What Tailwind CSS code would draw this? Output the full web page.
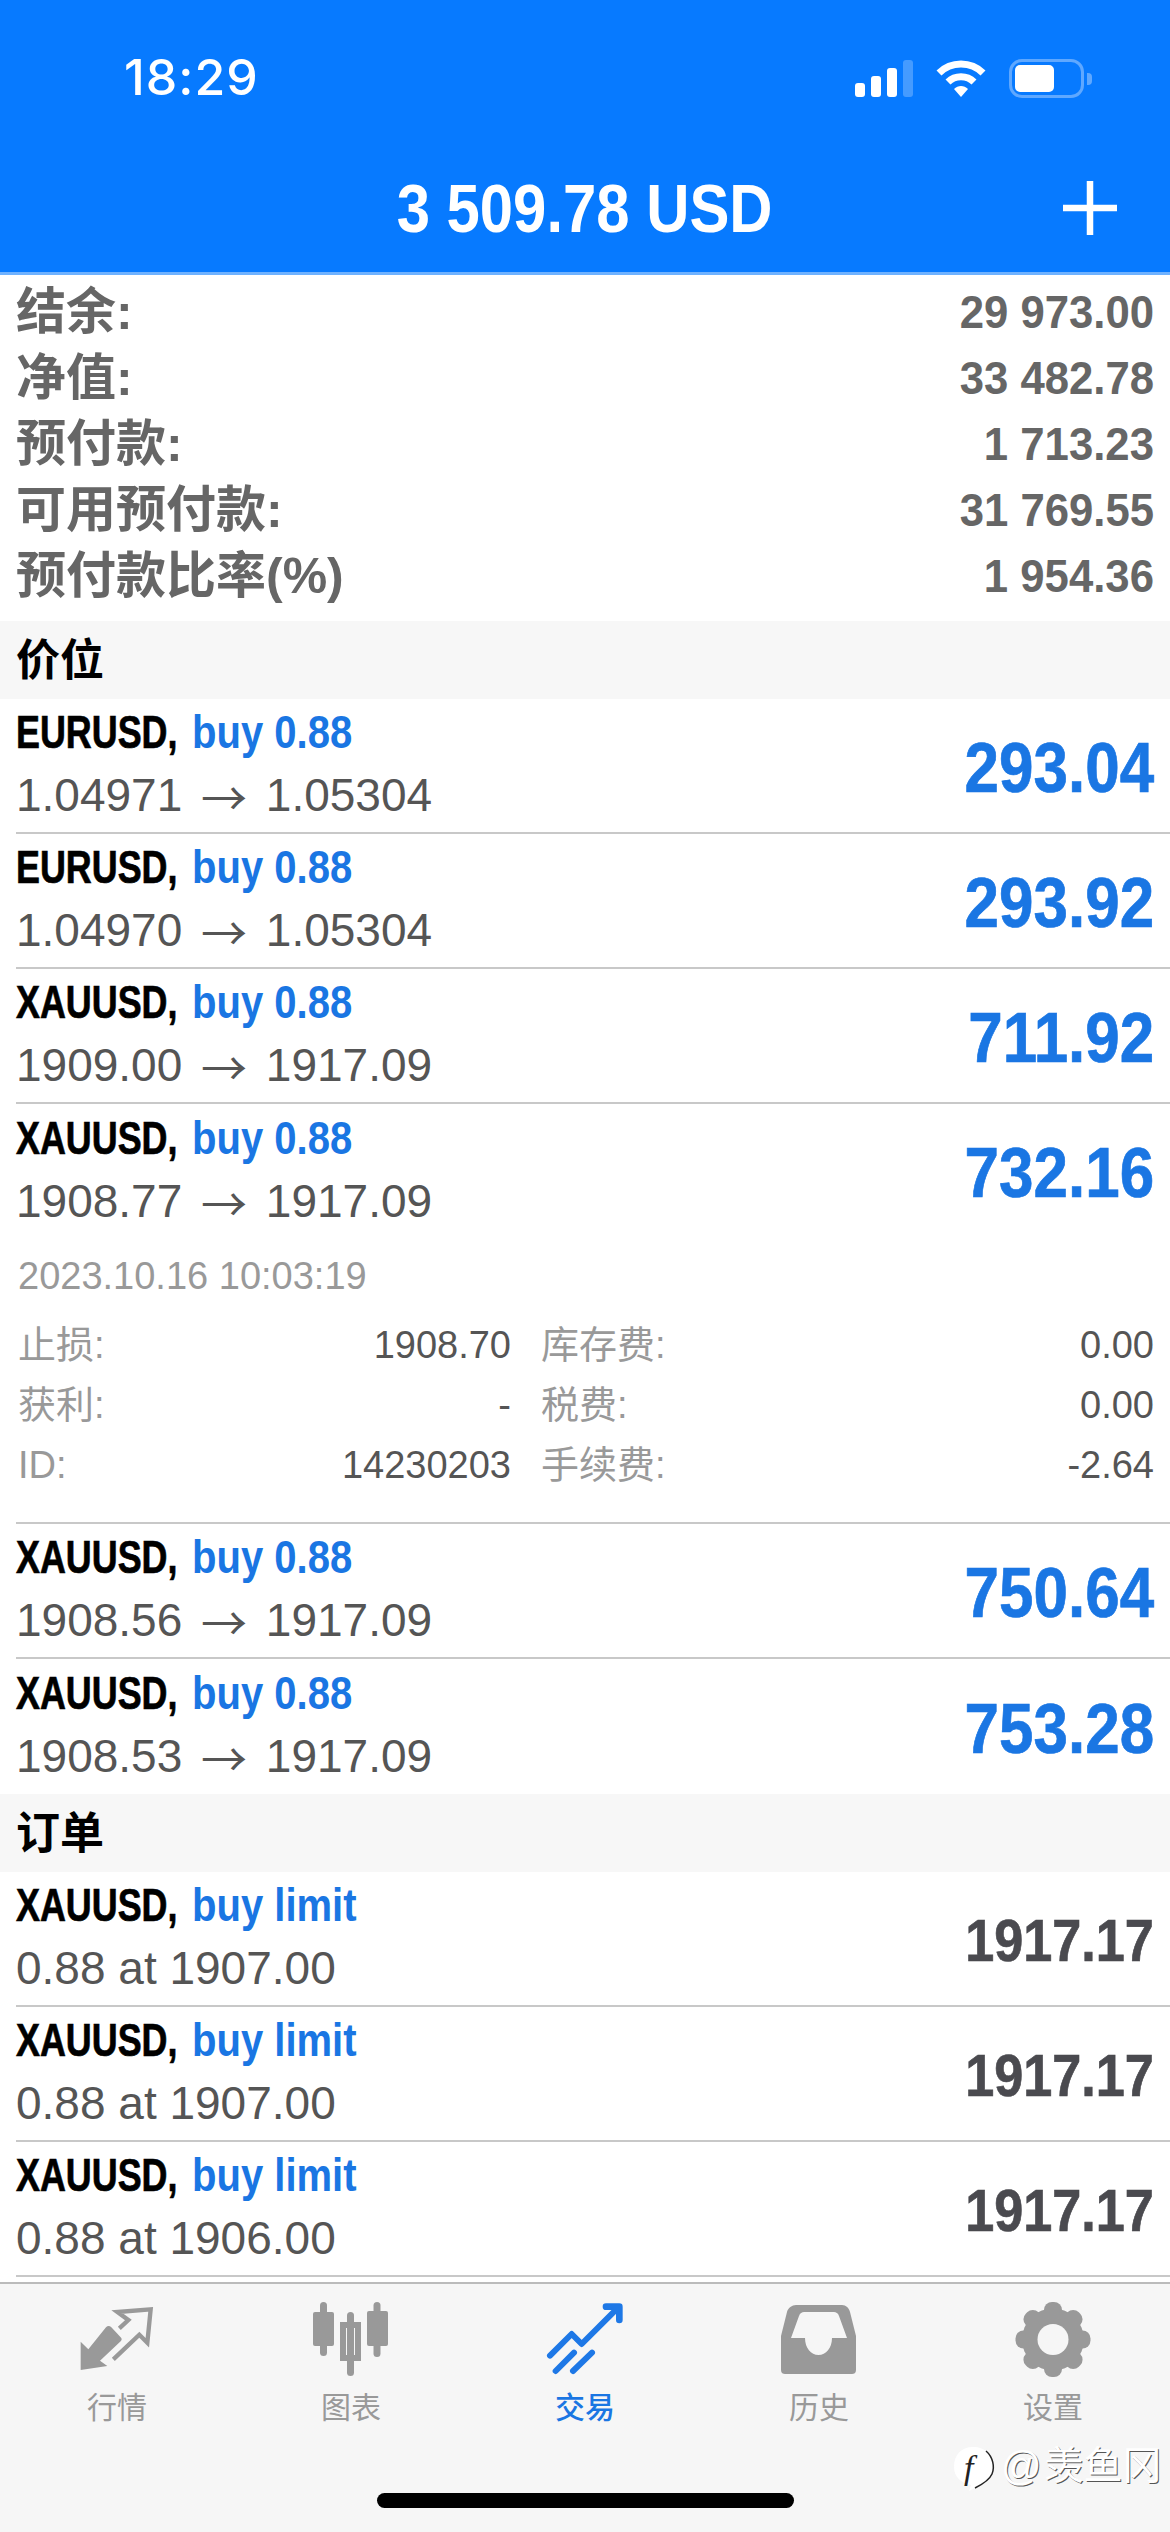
<!DOCTYPE html>
<html lang="en">
<head>
  <meta charset="UTF-8">
  <meta name="viewport" content="width=device-width, initial-scale=1.0">
  <title>Trade</title>
  <script src="https://cdn.jsdelivr.net/npm/@tailwindcss/browser@4"></script>
</head>
<body class="bg-white font-['Liberation_Sans','Noto_Sans_CJK_SC',sans-serif]">
<div class="relative w-[1170px] h-[2532px] overflow-hidden flex flex-col">

  <!-- blue header -->
  <header class="bg-[#077aff] h-[275px] border-b-[3px] border-[#6fb2ff] text-white shrink-0">
    <div class="h-[150px] flex items-start justify-between pt-[50px] pl-[124px] pr-[78px]">
      <span class="font-['Inter'] font-medium text-[50px] leading-[54px] tracking-[1px]">18:29</span>
      <div class="flex items-center gap-[23px] mt-[9px]">
        <div class="flex items-end gap-[6px] h-[37px]">
          <div class="w-[10px] h-[14px] rounded-[3px] bg-white"></div>
          <div class="w-[10px] h-[21px] rounded-[3px] bg-white"></div>
          <div class="w-[10px] h-[29px] rounded-[3px] bg-white"></div>
          <div class="w-[10px] h-[37px] rounded-[3px] bg-white/25"></div>
        </div>
        <svg width="50" height="37" viewBox="0 0 50 37" fill="none" stroke="white" stroke-width="7">
          <path d="M3 13 C15 1 35 1 47 13"/>
          <path d="M12 22 C19 15 31 15 38 22"/>
          <path d="M18 29 L25 37 L32 29 C28 25 22 25 18 29 Z" fill="white" stroke="none"/>
        </svg>
        <div class="flex items-center gap-[3px]">
          <div class="w-[75px] h-[39px] rounded-[13px] border-[3px] border-[#5fa8ff] p-[3px]">
            <div class="w-[39px] h-[27px] rounded-[5px] bg-white"></div>
          </div>
          <div class="w-[5px] h-[12px] rounded-r-[4px] bg-[#5fa8ff]"></div>
        </div>
      </div>
    </div>
    <div class="h-[116px] grid grid-cols-[1fr_auto_1fr] items-center">
      <div></div>
      <h1 class="font-bold text-[68px] scale-x-[.88] leading-none">3 509.78 USD</h1>
      <div class="flex justify-end pr-[53px]">
        <svg width="54" height="54" viewBox="0 0 54 54" stroke="white" stroke-width="6.5"><path d="M27 0V54M0 27H54"/></svg>
      </div>
    </div>
  </header>

  <!-- account summary -->
  <section class="h-[346px] pt-[4px] shrink-0 px-[16px] text-[#666] font-bold">
    <div class="h-[66px] flex items-center justify-between"><span class="text-[50px]">结余:</span><span class="text-[47px] origin-right scale-x-[.93]">29 973.00</span></div>
    <div class="h-[66px] flex items-center justify-between"><span class="text-[50px]">净值:</span><span class="text-[47px] origin-right scale-x-[.93]">33 482.78</span></div>
    <div class="h-[66px] flex items-center justify-between"><span class="text-[50px]">预付款:</span><span class="text-[47px] origin-right scale-x-[.93]">1 713.23</span></div>
    <div class="h-[66px] flex items-center justify-between"><span class="text-[50px]">可用预付款:</span><span class="text-[47px] origin-right scale-x-[.93]">31 769.55</span></div>
    <div class="h-[66px] flex items-center justify-between"><span class="text-[50px]">预付款比率(%)</span><span class="text-[47px] origin-right scale-x-[.93]">1 954.36</span></div>
  </section>

  <!-- positions -->
  <div class="h-[78px] shrink-0 bg-[#f7f7f7] px-[16px] pt-[2px] flex items-center text-[44px] font-bold text-black">价位</div>

  <div class="h-[135px] shrink-0 flex items-center justify-between ml-[16px] pr-[16px] border-b-2 border-[#c8c8c8]">
    <div class="pb-[3px]">
      <div class="h-[63px] flex items-center font-bold whitespace-nowrap"><span class="w-[176px] text-[46px] text-black origin-left scale-x-[.78] [-webkit-text-stroke:0.7px_black]">EURUSD,</span><span class="text-[46px] text-[#1a76e3] origin-left scale-x-[.87]">buy 0.88</span></div>
      <div class="h-[63px] flex items-center text-[46px] text-[#555] whitespace-pre">1.04971 <span class="font-['Noto_Sans_CJK_SC'] mx-[6px]">→</span> 1.05304</div>
    </div>
    <span class="pt-[5px] font-bold text-[70px] text-[#1a76e3] origin-right scale-x-[.885] [-webkit-text-stroke:0.7px_#1a76e3]">293.04</span>
  </div>
  <div class="h-[135px] shrink-0 flex items-center justify-between ml-[16px] pr-[16px] border-b-2 border-[#c8c8c8]">
    <div class="pb-[3px]">
      <div class="h-[63px] flex items-center font-bold whitespace-nowrap"><span class="w-[176px] text-[46px] text-black origin-left scale-x-[.78] [-webkit-text-stroke:0.7px_black]">EURUSD,</span><span class="text-[46px] text-[#1a76e3] origin-left scale-x-[.87]">buy 0.88</span></div>
      <div class="h-[63px] flex items-center text-[46px] text-[#555] whitespace-pre">1.04970 <span class="font-['Noto_Sans_CJK_SC'] mx-[6px]">→</span> 1.05304</div>
    </div>
    <span class="pt-[5px] font-bold text-[70px] text-[#1a76e3] origin-right scale-x-[.885] [-webkit-text-stroke:0.7px_#1a76e3]">293.92</span>
  </div>
  <div class="h-[135px] shrink-0 flex items-center justify-between ml-[16px] pr-[16px] border-b-2 border-[#c8c8c8]">
    <div class="pb-[3px]">
      <div class="h-[63px] flex items-center font-bold whitespace-nowrap"><span class="w-[176px] text-[46px] text-black origin-left scale-x-[.78] [-webkit-text-stroke:0.7px_black]">XAUUSD,</span><span class="text-[46px] text-[#1a76e3] origin-left scale-x-[.87]">buy 0.88</span></div>
      <div class="h-[63px] flex items-center text-[46px] text-[#555] whitespace-pre">1909.00 <span class="font-['Noto_Sans_CJK_SC'] mx-[6px]">→</span> 1917.09</div>
    </div>
    <span class="pt-[5px] font-bold text-[70px] text-[#1a76e3] origin-right scale-x-[.885] [-webkit-text-stroke:0.7px_#1a76e3]">711.92</span>
  </div>

  <!-- expanded position -->
  <div class="h-[420px] shrink-0 border-b-2 border-[#c8c8c8] ml-[16px] pr-[16px]">
    <div class="h-[134px] flex items-center justify-between">
      <div class="pb-[3px]">
        <div class="h-[63px] flex items-center font-bold whitespace-nowrap"><span class="w-[176px] text-[46px] text-black origin-left scale-x-[.78] [-webkit-text-stroke:0.7px_black]">XAUUSD,</span><span class="text-[46px] text-[#1a76e3] origin-left scale-x-[.87]">buy 0.88</span></div>
        <div class="h-[63px] flex items-center text-[46px] text-[#555] whitespace-pre">1908.77 <span class="font-['Noto_Sans_CJK_SC'] mx-[6px]">→</span> 1917.09</div>
      </div>
      <span class="pt-[5px] font-bold text-[70px] text-[#1a76e3] origin-right scale-x-[.885] [-webkit-text-stroke:0.7px_#1a76e3]">732.16</span>
    </div>
    <div class="h-[77px] flex items-center pl-[2px] text-[38px] text-[#999]">2023.10.16 10:03:19</div>
    <div class="grid grid-cols-[493px_1fr] gap-x-[30px] pl-[2px] text-[38px] text-[#555]">
      <div class="h-[60px] flex items-center justify-between"><span class="text-[#999]">止损:</span><span>1908.70</span></div>
      <div class="h-[60px] flex items-center justify-between"><span class="text-[#999]">库存费:</span><span>0.00</span></div>
      <div class="h-[60px] flex items-center justify-between"><span class="text-[#999]">获利:</span><span>-</span></div>
      <div class="h-[60px] flex items-center justify-between"><span class="text-[#999]">税费:</span><span>0.00</span></div>
      <div class="h-[60px] flex items-center justify-between"><span class="text-[#999]">ID:</span><span>14230203</span></div>
      <div class="h-[60px] flex items-center justify-between"><span class="text-[#999]">手续费:</span><span>-2.64</span></div>
    </div>
  </div>

  <div class="h-[135px] shrink-0 flex items-center justify-between ml-[16px] pr-[16px] border-b-2 border-[#c8c8c8]">
    <div class="pb-[3px]">
      <div class="h-[63px] flex items-center font-bold whitespace-nowrap"><span class="w-[176px] text-[46px] text-black origin-left scale-x-[.78] [-webkit-text-stroke:0.7px_black]">XAUUSD,</span><span class="text-[46px] text-[#1a76e3] origin-left scale-x-[.87]">buy 0.88</span></div>
      <div class="h-[63px] flex items-center text-[46px] text-[#555] whitespace-pre">1908.56 <span class="font-['Noto_Sans_CJK_SC'] mx-[6px]">→</span> 1917.09</div>
    </div>
    <span class="pt-[5px] font-bold text-[70px] text-[#1a76e3] origin-right scale-x-[.885] [-webkit-text-stroke:0.7px_#1a76e3]">750.64</span>
  </div>
  <div class="h-[135px] shrink-0 flex items-center justify-between ml-[16px] pr-[16px]">
    <div class="pb-[3px]">
      <div class="h-[63px] flex items-center font-bold whitespace-nowrap"><span class="w-[176px] text-[46px] text-black origin-left scale-x-[.78] [-webkit-text-stroke:0.7px_black]">XAUUSD,</span><span class="text-[46px] text-[#1a76e3] origin-left scale-x-[.87]">buy 0.88</span></div>
      <div class="h-[63px] flex items-center text-[46px] text-[#555] whitespace-pre">1908.53 <span class="font-['Noto_Sans_CJK_SC'] mx-[6px]">→</span> 1917.09</div>
    </div>
    <span class="pt-[5px] font-bold text-[70px] text-[#1a76e3] origin-right scale-x-[.885] [-webkit-text-stroke:0.7px_#1a76e3]">753.28</span>
  </div>

  <!-- orders -->
  <div class="h-[78px] shrink-0 bg-[#f7f7f7] px-[16px] pt-[2px] flex items-center text-[44px] font-bold text-black">订单</div>

  <div class="h-[135px] shrink-0 flex items-center justify-between ml-[16px] pr-[16px] border-b-2 border-[#c8c8c8]">
    <div class="pb-[3px]">
      <div class="h-[63px] flex items-center font-bold whitespace-nowrap"><span class="w-[176px] text-[46px] text-black origin-left scale-x-[.78] [-webkit-text-stroke:0.7px_black]">XAUUSD,</span><span class="text-[46px] text-[#1a76e3] origin-left scale-x-[.87]">buy limit</span></div>
      <div class="h-[63px] flex items-center text-[46px] text-[#555]">0.88 at 1907.00</div>
    </div>
    <span class="pt-[5px] font-bold text-[60px] text-[#4a4a4f] origin-right scale-x-[.87] [-webkit-text-stroke:0.7px_#4a4a4f]">1917.17</span>
  </div>
  <div class="h-[135px] shrink-0 flex items-center justify-between ml-[16px] pr-[16px] border-b-2 border-[#c8c8c8]">
    <div class="pb-[3px]">
      <div class="h-[63px] flex items-center font-bold whitespace-nowrap"><span class="w-[176px] text-[46px] text-black origin-left scale-x-[.78] [-webkit-text-stroke:0.7px_black]">XAUUSD,</span><span class="text-[46px] text-[#1a76e3] origin-left scale-x-[.87]">buy limit</span></div>
      <div class="h-[63px] flex items-center text-[46px] text-[#555]">0.88 at 1907.00</div>
    </div>
    <span class="pt-[5px] font-bold text-[60px] text-[#4a4a4f] origin-right scale-x-[.87] [-webkit-text-stroke:0.7px_#4a4a4f]">1917.17</span>
  </div>
  <div class="h-[135px] shrink-0 flex items-center justify-between ml-[16px] pr-[16px] border-b-2 border-[#c8c8c8]">
    <div class="pb-[3px]">
      <div class="h-[63px] flex items-center font-bold whitespace-nowrap"><span class="w-[176px] text-[46px] text-black origin-left scale-x-[.78] [-webkit-text-stroke:0.7px_black]">XAUUSD,</span><span class="text-[46px] text-[#1a76e3] origin-left scale-x-[.87]">buy limit</span></div>
      <div class="h-[63px] flex items-center text-[46px] text-[#555]">0.88 at 1906.00</div>
    </div>
    <span class="pt-[5px] font-bold text-[60px] text-[#4a4a4f] origin-right scale-x-[.87] [-webkit-text-stroke:0.7px_#4a4a4f]">1917.17</span>
  </div>

  <div class="h-[5px] shrink-0"></div>

  <!-- tab bar -->
  <nav class="flex-1 bg-[#f6f6f6] border-t-2 border-[#bbb] grid grid-cols-5 items-start pt-[6px] text-[30px] leading-[36px] text-[#999] text-center">
    <div class="flex flex-col items-center">
      <svg width="110" height="100" viewBox="6 0 330 300">
        <path d="M62 240 V155 L85 178 L138 112 Q146 104 154 112 L182 142 Q188 148 182 154 L120 212 L142 228 Z" fill="#999"/>
        <path d="M178 115 L205 90 L172 66 L272 58 L262 158 L238 134 L160 208" fill="none" stroke="#999" stroke-width="13"/>
      </svg>
      <span>行情</span>
    </div>
    <div class="flex flex-col items-center">
      <svg width="110" height="100" viewBox="0 0 110 100" fill="#999">
        <rect x="17" y="22" width="21" height="34" rx="2"/><rect x="24" y="12" width="7" height="54" rx="3.500"/>
        <rect x="71" y="21" width="21" height="35" rx="2"/><rect x="77.500" y="12" width="7" height="55" rx="3.500"/>
        <rect x="51" y="22" width="7" height="64" rx="3.500"/>
        <path fill-rule="evenodd" d="M44 32H65V71H44Z M50 38V65H59V38Z"/>
      </svg>
      <span>图表</span>
    </div>
    <div class="flex flex-col items-center text-[#1a76e3] font-medium">
      <svg width="110" height="100" viewBox="0 0 330 300" fill="none" stroke="#1e78e6" stroke-width="18" stroke-linecap="round" stroke-linejoin="round">
        <path d="M60 197 L125 132 L155 162 L262 55"/>
        <path d="M228 50 H268 V90" stroke-width="20"/>
        <path d="M77 243 L132 188"/>
        <path d="M129 243 L186 188"/>
      </svg>
      <span>交易</span>
    </div>
    <div class="flex flex-col items-center">
      <svg width="110" height="100" viewBox="0 0 110 100" fill="#999">
        <path fill-rule="evenodd" d="M32 15H78C82 15 85 18 86 22L92 46V80C92 83 90 84 88 84H21C19 84 17 83 17 80V46L23 22C24 18 28 15 32 15Z M40 22C38 22 36 23 35 26L27 48H41C41 58 47 65 54.500 65C62 65 68 58 68 48H83L75 26C74 23 72 22 70 22Z"/>
      </svg>
      <span>历史</span>
    </div>
    <div class="flex flex-col items-center">
      <svg width="110" height="100" viewBox="0 0 110 100" fill="#999">
        <circle cx="55" cy="49.500" r="31"/>
        <rect x="46" y="12" width="18" height="75" rx="8"/>
        <rect x="46" y="12" width="18" height="75" rx="8" transform="rotate(45 55 49.500)"/>
        <rect x="46" y="12" width="18" height="75" rx="8" transform="rotate(90 55 49.500)"/>
        <rect x="46" y="12" width="18" height="75" rx="8" transform="rotate(135 55 49.500)"/>
        <circle cx="55" cy="49.500" r="15.500" fill="#f6f6f6"/>
      </svg>
      <span>设置</span>
    </div>
  </nav>

  <!-- home indicator and watermark sit over the tab bar -->
  <div class="absolute left-[377px] top-[2493px] w-[417px] h-[15px] rounded-full bg-black"></div>
  <div class="absolute left-[953px] top-[2445px] flex items-start text-white">
    <svg width="44" height="48" viewBox="0 0 44 48">
      <path d="M20 2C32 2 41 10 41 22C41 32 32 38 24 42L16 46L18 40C8 38 1 32 1 22C1 10 8 2 20 2Z" fill="#fff"/>
      <path d="M33 6C40 12 42 22 39 29C36 36 28 40 22 43" fill="none" stroke="#222" stroke-width="1.500"/>
      <text x="11" y="34" font-size="34" font-style="italic" font-family="Liberation Serif" fill="#222">f</text>
    </svg>
    <span class="ml-[4px] text-[40px] leading-[42px] [text-shadow:1px_1px_0_#555]">@</span>
    <span class="ml-[3px] text-[39px] leading-[42px] [text-shadow:1px_1px_0_#555]">羡鱼冈</span>
  </div>
</div>
</body>
</html>
